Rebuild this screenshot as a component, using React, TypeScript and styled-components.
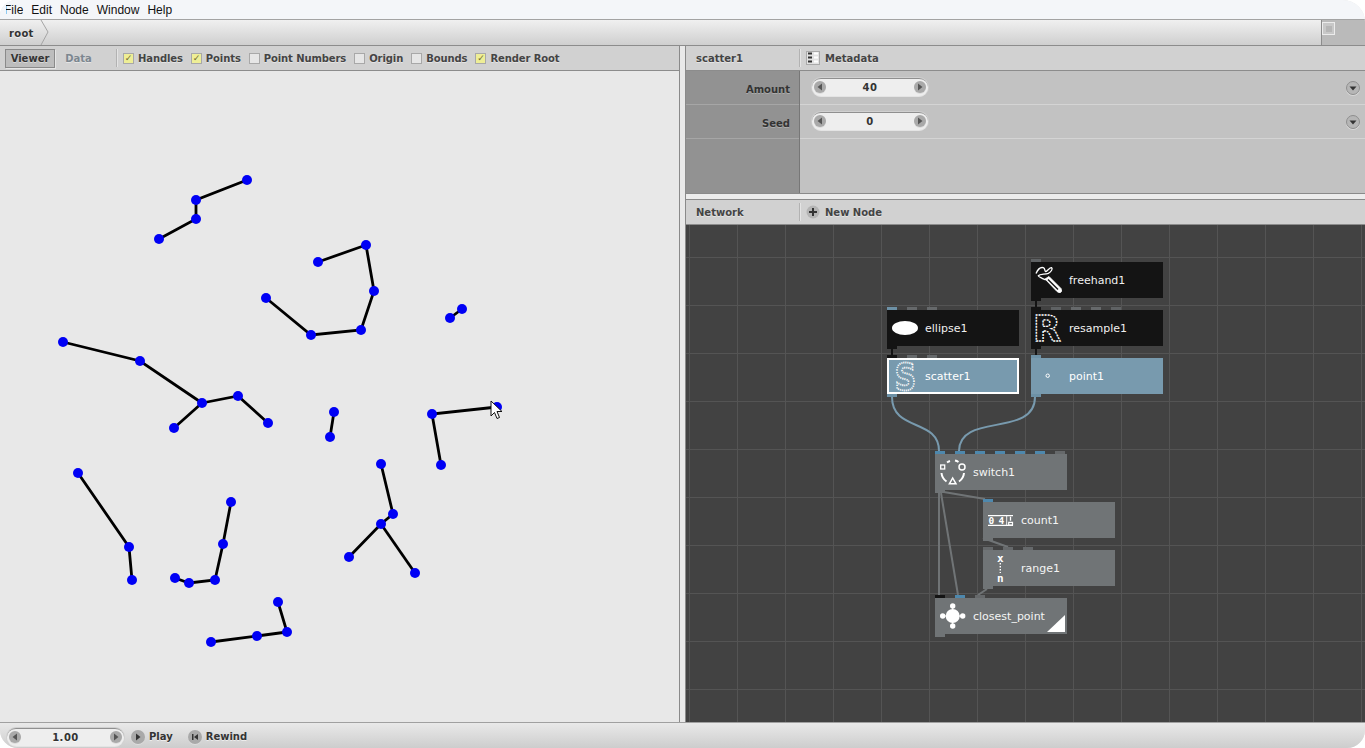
import React from "react";
import styled, { createGlobalStyle } from "styled-components";

const GlobalStyle = createGlobalStyle`
  html, body {
    margin: 0;
    padding: 0;
    background: #ffffff;
    overflow: hidden;
  }
`;

const uiFont = `"DejaVu Sans", Verdana, sans-serif`;

const Window = styled.div`
  width: 1365px;
  height: 748px;
  display: flex;
  flex-direction: column;
  overflow: hidden;
  border-radius: 16px 22px 18px 18px;
  font-family: ${uiFont};
  background: #e8e8e8;
`;

const MenuBar = styled.div`
  height: 19px;
  flex: none;
  display: flex;
  align-items: center;
  gap: 8px;
  padding-left: 4px;
  background: #f4f6f9;
  border-bottom: 1px solid #a3a3a3;
`;

const MenuItem = styled.span`
  font-family: "Liberation Sans", Arial, sans-serif;
  font-size: 12px;
  color: #111;

  &:first-child {
    clip-path: inset(0 0 0 2px);
  }
`;

const AddressBar = styled.div`
  height: 25px;
  flex: none;
  display: flex;
  background: linear-gradient(#f0f0f0, #cfcfcf);
  border-bottom: 1px solid #8c8c8c;
`;

const Crumb = styled.div`
  display: flex;
  align-items: center;
  padding-left: 9px;
  font-size: 10px;
  font-weight: bold;
  letter-spacing: 0.3px;
  color: #333;
  text-shadow: 0 1px 0 rgba(255, 255, 255, 0.6);
`;

const CrumbText = styled.span`
  padding-top: 2px;
`;

const CrumbArrow = styled.svg`
  width: 10px;
  height: 25px;
  margin-left: 6px;
`;

const AddressEnd = styled.div`
  margin-left: auto;
  width: 43px;
  background: #bababa;
  border-left: 1px solid #8c8c8c;
  display: flex;
  align-items: flex-start;
`;

const ExpandButton = styled.div`
  width: 11px;
  height: 11px;
  margin-top: 2px;
  border: 1px solid #ececec;
  background: #c8c8c8;
  display: flex;
  align-items: center;
  justify-content: center;

  &::after {
    content: "";
    width: 6px;
    height: 6px;
    background: #b6b6b6;
  }
`;

const Main = styled.div`
  flex: 1;
  min-height: 0;
  display: flex;
`;

const LeftPane = styled.div`
  width: 679px;
  flex: none;
  display: flex;
  flex-direction: column;
`;

const VSplitter = styled.div`
  width: 7px;
  flex: none;
  box-sizing: border-box;
  background: #e9e9e9;
  border-left: 1px solid #8a8a8a;
  border-right: 1px solid #8a8a8a;
`;

const RightPane = styled.div`
  flex: 1;
  min-width: 0;
  display: flex;
  flex-direction: column;
`;

const HeaderBar = styled.div`
  height: 24px;
  flex: none;
  display: flex;
  align-items: center;
  background: #d1d1d1;
  border-bottom: 1px solid #8c8c8c;
  font-size: 10px;
  font-weight: bold;
  color: #444;
  text-shadow: 0 1px 0 rgba(255, 255, 255, 0.45);
`;

const ViewerTab = styled.div<{ $active?: boolean }>`
  height: 19px;
  width: ${(p) => (p.$active ? "50px" : "47px")};
  margin-left: ${(p) => (p.$active ? "5px" : "0")};
  box-sizing: border-box;
  display: flex;
  align-items: center;
  justify-content: center;
  color: ${(p) => (p.$active ? "#333" : "#7c8790")};
  background: ${(p) => (p.$active ? "#bdbdbd" : "transparent")};
  border: ${(p) => (p.$active ? "1px solid #8a8a8a" : "none")};
  box-shadow: ${(p) => (p.$active ? "1px 1px 0 #e6e6e6" : "none")};
`;

const Separator = styled.div<{ $left?: number }>`
  width: 1px;
  height: 18px;
  background: #b2b2b2;
  box-shadow: 1px 0 0 #e4e4e4;
  margin-left: ${(p) => p.$left ?? 0}px;
`;

const Options = styled.div`
  display: flex;
  align-items: center;
  gap: 8px;
  margin-left: 6px;
  letter-spacing: -0.1px;
`;

const Option = styled.label`
  display: flex;
  align-items: center;
  gap: 4px;
`;

const CheckBox = styled.span<{ $on?: boolean }>`
  width: 9px;
  height: 9px;
  display: flex;
  align-items: center;
  justify-content: center;
  background: ${(p) => (p.$on ? "#eeee96" : "#e6e6e6")};
  border: 1px solid #a8a8a8;
  font-size: 9px;
  line-height: 9px;
  color: #6f6f30;
  text-shadow: none;
`;

const Canvas = styled.div`
  flex: 1;
  min-height: 0;
  position: relative;
  background: #e8e8e8;
`;

const ViewerSvg = styled.svg`
  display: block;
  width: 100%;
  height: 100%;
`;

const Cursor = styled.svg`
  position: absolute;
  left: 490px;
  top: 329px;
  width: 13px;
  height: 20px;
`;

const PaneTitle = styled.div`
  width: 113px;
  box-sizing: border-box;
  padding-left: 10px;
  flex: none;
`;

const HeaderIcon = styled.svg`
  width: 14px;
  height: 14px;
  margin-right: 5px;
`;

const HeaderAction = styled.div`
  display: flex;
  align-items: center;
  margin-left: 6px;
`;

const ParamPanel = styled.div`
  height: 122px;
  flex: none;
  display: grid;
  grid-template-columns: 114px 1fr;
  background: #c2c2c2;
`;

const LabelColumn = styled.div`
  background: #929292;
  border-right: 1px solid #777;
  display: flex;
  flex-direction: column;
`;

const ParamLabel = styled.div`
  height: 30px;
  padding: 3px 9px 0 0;
  border-bottom: 1px solid #a6a6a6;
  display: flex;
  align-items: center;
  justify-content: flex-end;
  font-size: 10px;
  font-weight: bold;
  color: #333;
  text-shadow: 0 1px 0 rgba(255, 255, 255, 0.25);
`;

const ValueColumn = styled.div`
  display: flex;
  flex-direction: column;
`;

const ParamRow = styled.div`
  height: 31px;
  border-bottom: 1px solid #d4d4d4;
  display: flex;
  align-items: center;
  padding: 0 5px 2px 12px;
`;

const Spinner = styled.div<{ $width: number }>`
  width: ${(p) => p.$width}px;
  height: 18px;
  box-sizing: border-box;
  display: flex;
  align-items: center;
  justify-content: space-between;
  padding: 0 2px;
  border-radius: 9px;
  background: #eeeeee;
  border-top: 1px solid #8f8f8f;
  box-shadow: 0 1px 0 #e4e4e4, 0 0 0 1px #d0d0d0;
  font-size: 10px;
  font-weight: bold;
  letter-spacing: 0.5px;
  color: #333;
`;

const RoundButton = styled.span<{ $size?: number }>`
  width: ${(p) => p.$size ?? 12}px;
  height: ${(p) => p.$size ?? 12}px;
  flex: none;
  border-radius: 50%;
  background: #a9a9a9;
  box-shadow: 0 1px 0 #dddddd;
  display: flex;
  align-items: center;
  justify-content: center;
`;

const Glyph = styled.svg`
  width: 8px;
  height: 8px;
  display: block;
`;

const MenuArrow = styled(RoundButton)`
  margin: 2px 0 0 auto;
  background: #b6b6b6;
  border: 1px solid #8e8e8e;
  box-sizing: border-box;
  box-shadow: 0 1px 0 #d8d8d8;
`;

const HSplitter = styled.div`
  height: 5px;
  flex: none;
  background: #ececec;
  border-top: 1px solid #8a8a8a;
  border-bottom: 1px solid #8a8a8a;
`;

const NetworkView = styled.div`
  flex: 1;
  min-height: 0;
  position: relative;
  overflow: hidden;
  background-color: #424242;
  background-image: linear-gradient(to right, #545454 1px, transparent 1px),
    linear-gradient(to bottom, #545454 1px, transparent 1px);
  background-size: 48px 48px;
  background-position: 3px 32px;
`;

const Wires = styled.svg`
  position: absolute;
  left: 0;
  top: 0;
  width: 679px;
  height: 497px;
  fill: none;
`;

const palette = {
  dark: { body: "#141414", text: "#f0f0f0" },
  blue: { body: "#789aae", text: "#ffffff" },
  gray: { body: "#707476", text: "#f4f4f4" },
};

const Node = styled.div<{ $x: number; $y: number; $kind: keyof typeof palette; $selected?: boolean }>`
  position: absolute;
  left: ${(p) => p.$x}px;
  top: ${(p) => p.$y}px;
  width: 132px;
  height: 36px;
  box-sizing: border-box;
  display: flex;
  align-items: center;
  padding-left: 38px;
  background: ${(p) => palette[p.$kind].body};
  color: ${(p) => palette[p.$kind].text};
  box-shadow: ${(p) => (p.$selected ? "inset 0 0 0 2px #ffffff" : "none")};
  font-size: 11px;
`;

const NodeIcon = styled.svg`
  position: absolute;
  left: 4px;
  top: 2px;
  width: 32px;
  height: 32px;
  overflow: visible;
`;

const Port = styled.span<{ $offset: number; $color: string; $bottom?: boolean }>`
  position: absolute;
  left: ${(p) => p.$offset}px;
  top: ${(p) => (p.$bottom ? "36px" : "-3px")};
  width: 10px;
  height: 3px;
  background: ${(p) => p.$color};
`;

const CornerFlag = styled.svg`
  position: absolute;
  right: 2px;
  bottom: 2px;
  width: 18px;
  height: 17px;
`;

const Footer = styled.div`
  height: 23px;
  flex: none;
  display: flex;
  align-items: center;
  padding: 2px 0 0 7px;
  background: linear-gradient(#e9e9e9, #cdcdcd);
  border-top: 1px solid #a0a0a0;
  font-size: 10px;
  font-weight: bold;
  color: #333;
  text-shadow: 0 1px 0 rgba(255, 255, 255, 0.6);
`;

const FooterAction = styled.div<{ $left: number }>`
  display: flex;
  align-items: center;
  gap: 4px;
  margin-left: ${(p) => p.$left}px;
`;

const PORT_BLUE = "#4e88ad";
const PORT_LIGHTBLUE = "#6d91a6";
const PORT_GRAY = "#66696b";
const PORT_DARK = "#141414";
const PORT_MUTED = "#5f6264";
const PORT_BODY = "#707476";

const strokes: string[] = [
  "247,180 196,200 196,219 159,239",
  "318,262 366,245 374,291 361,330 311,335 266,298",
  "462,309 450,318",
  "63,342 140,361 202,403 174,428",
  "202,403 238,396 268,423",
  "334,412 330,437",
  "441,465 432,414 497,407",
  "78,473 129,547 132,580",
  "231,502 223,544 215,580 189,583 175,578",
  "381,464 393,514 381,524 349,557",
  "381,524 415,573",
  "278,602 287,632 257,636 211,642",
];

const dots = Array.from(new Set(strokes.flatMap((s) => s.split(" ")))).map((p) =>
  p.split(",").map(Number)
);

const Arrow = ({ dir, color = "#555" }: { dir: "left" | "right" | "down"; color?: string }) => (
  <Glyph viewBox="0 0 8 8">
    {dir === "left" && <path d="M6 0.5V7.5L1.5 4Z" fill={color} />}
    {dir === "right" && <path d="M2 0.5V7.5L6.5 4Z" fill={color} />}
    {dir === "down" && <path d="M0.5 2.5H7.5L4 6.5Z" fill={color} />}
  </Glyph>
);

const NumberField = ({ value, width }: { value: string; width: number }) => (
  <Spinner $width={width}>
    <RoundButton><Arrow dir="left" /></RoundButton>
    {value}
    <RoundButton><Arrow dir="right" /></RoundButton>
  </Spinner>
);

const icons: Record<string, React.ReactNode> = {
  freehand: (
    <g fill="none" stroke="#fff">
      <path d="M1 9.5 C3 5 6 3 8.3 3.7 C10.5 4.5 9.5 7.5 10.7 7.7 C12.5 7 15 3 16.7 3.7 C18 5 16 8 13.3 9.3 C10 10.5 5 10 3.3 11.7 C3 13 8 14.5 10.7 16" strokeWidth="1.3" />
      <path d="M10 15 L14 12.5 L26 24.5 Q27.5 27.5 25.5 28.5 Q23.5 29 22 27.5 Z" fill="#fff" strokeWidth="0.8" />
      <path d="M13 15.5 L23 25.5" stroke="#141414" strokeWidth="1.4" />
    </g>
  ),
  resample: (
    <g opacity="0.99">
      <text x="-2" y="29" fontFamily="'DejaVu Sans', sans-serif" fontWeight="bold" fontSize="36" fill="none" stroke="#fff" strokeWidth="1.4" strokeDasharray="2 1">R</text>
    </g>
  ),
  ellipse: <ellipse cx="14" cy="16" rx="13" ry="7" fill="#fff" />,
  scatter: (
    <g opacity="0.99" transform="translate(3 0) scale(0.8 1)">
      <text x="1" y="30" fontFamily="'DejaVu Sans', sans-serif" fontWeight="bold" fontSize="37" fill="none" stroke="#fff" strokeWidth="1.9" strokeDasharray="1.3 1.2">S</text>
    </g>
  ),
  point: <circle cx="12.7" cy="15.7" r="1.7" fill="none" stroke="#fff" strokeWidth="1" />,
  switch: (
    <g fill="none" stroke="#fff" strokeWidth="2">
      <path d="M8 6.5 A11.5 11.5 0 0 1 11 5 M16 4.6 A11.5 11.5 0 0 1 19.5 6 M25 17 A11.5 11.5 0 0 1 20 25.5 M7.5 25.5 A11.5 11.5 0 0 1 2.5 17" />
      <rect x="1.7" y="9" width="4" height="4" strokeWidth="1.3" />
      <circle cx="23" cy="11" r="3" strokeWidth="1.5" />
      <path d="M13.7 22 L17 27.8 H10.4 Z" strokeWidth="1.5" />
    </g>
  ),
  count: (
    <g>
      <path d="M1 11.7 H26 M1 21.3 H26" stroke="#fff" strokeWidth="1.2" />
      <text x="1.6" y="20" fontFamily="'DejaVu Sans Mono', monospace" fontWeight="bold" fontSize="9.5" fill="#fff">0</text>
      <text x="11.5" y="20" fontFamily="'DejaVu Sans Mono', monospace" fontWeight="bold" fontSize="9.5" fill="#fff">4</text>
      <path d="M19.7 12 V21" stroke="#fff" strokeWidth="0.9" />
      <path d="M23.5 12.7 V16.7" stroke="#fff" strokeWidth="1.3" />
      <path d="M21.7 18.3 H25.5 V21 H21.7 Z" fill="none" stroke="#fff" strokeWidth="1.2" />
    </g>
  ),
  range: (
    <g fill="#fff" textAnchor="middle" fontFamily="'DejaVu Sans Mono', monospace" fontWeight="bold" fontSize="11">
      <text x="13.3" y="9.7">x</text>
      <path d="M13.3 11 V21" stroke="#fff" strokeWidth="1.4" strokeDasharray="1.4 1.6" fill="none" />
      <text x="13.3" y="29.7">n</text>
    </g>
  ),
  closest: (
    <g fill="#fff">
      <circle cx="13.7" cy="16" r="7" />
      <circle cx="13.7" cy="6" r="2.7" />
      <circle cx="13.7" cy="26" r="2.7" />
      <circle cx="3.7" cy="16" r="2.7" />
      <circle cx="23.7" cy="16" r="2.7" />
      <path d="M13.7 6 V26 M3.7 16 H23.7" stroke="#fff" strokeWidth="1" />
    </g>
  ),
};

type PortDef = { offset: number; color: string; bottom?: boolean };

type NodeDef = {
  label: string;
  x: number;
  y: number;
  kind: keyof typeof palette;
  icon: string;
  selected?: boolean;
  flag?: boolean;
  ports: PortDef[];
};

const topPorts = (...colors: string[]): PortDef[] =>
  colors.map((color, i) => ({ offset: i * 20, color }));

const output = (color: string): PortDef => ({ offset: 0, color, bottom: true });

const nodes: NodeDef[] = [
  { label: "freehand1", x: 345, y: 37, kind: "dark", icon: "freehand",
    ports: [...topPorts(PORT_MUTED), output(PORT_DARK)] },
  { label: "ellipse1", x: 201, y: 85, kind: "dark", icon: "ellipse",
    ports: [...topPorts(PORT_LIGHTBLUE, PORT_GRAY, PORT_GRAY), output(PORT_DARK)] },
  { label: "resample1", x: 345, y: 85, kind: "dark", icon: "resample",
    ports: [...topPorts(PORT_DARK, PORT_MUTED, PORT_GRAY, PORT_GRAY, PORT_MUTED), output(PORT_DARK)] },
  { label: "scatter1", x: 201, y: 133, kind: "blue", icon: "scatter", selected: true,
    ports: [...topPorts(PORT_DARK, PORT_GRAY, PORT_GRAY), output(PORT_LIGHTBLUE)] },
  { label: "point1", x: 345, y: 133, kind: "blue", icon: "point",
    ports: [...topPorts(PORT_LIGHTBLUE), output(PORT_LIGHTBLUE)] },
  { label: "switch1", x: 249, y: 229, kind: "gray", icon: "switch",
    ports: [...topPorts(PORT_BLUE, PORT_BLUE, PORT_BLUE, PORT_BLUE, PORT_BLUE, PORT_BLUE, PORT_GRAY), output(PORT_BODY)] },
  { label: "count1", x: 297, y: 277, kind: "gray", icon: "count",
    ports: [...topPorts(PORT_BLUE), output(PORT_BODY)] },
  { label: "range1", x: 297, y: 325, kind: "gray", icon: "range",
    ports: [...topPorts(PORT_GRAY, PORT_GRAY, PORT_GRAY), output(PORT_BODY)] },
  { label: "closest_point", x: 249, y: 373, kind: "gray", icon: "closest", flag: true,
    ports: [...topPorts(PORT_DARK, PORT_BLUE, PORT_GRAY), output(PORT_BODY)] },
];

const options: { label: string; on: boolean }[] = [
  { label: "Handles", on: true },
  { label: "Points", on: true },
  { label: "Point Numbers", on: false },
  { label: "Origin", on: false },
  { label: "Bounds", on: false },
  { label: "Render Root", on: true },
];

const App = () => {
  return (
    <Window>
      <GlobalStyle />
      <MenuBar>
        {["File", "Edit", "Node", "Window", "Help"].map((m) => (
          <MenuItem key={m}>{m}</MenuItem>
        ))}
      </MenuBar>
      <AddressBar>
        <Crumb>
          <CrumbText>root</CrumbText>
          <CrumbArrow viewBox="0 0 10 25">
            <path d="M1 0 L8 12 L1 25" fill="none" stroke="#a4a4a4" />
          </CrumbArrow>
        </Crumb>
        <AddressEnd><ExpandButton /></AddressEnd>
      </AddressBar>
      <Main>
        <LeftPane>
          <HeaderBar>
            <ViewerTab $active>Viewer</ViewerTab>
            <ViewerTab>Data</ViewerTab>
            <Separator $left={14} />
            <Options>
              {options.map((o) => (
                <Option key={o.label}>
                  <CheckBox $on={o.on}>{o.on ? "✓" : ""}</CheckBox>
                  {o.label}
                </Option>
              ))}
            </Options>
          </HeaderBar>
          <Canvas>
            <ViewerSvg viewBox="0 71 679 651">
              {strokes.map((s) => (
                <polyline key={s} points={s} fill="none" stroke="#000" strokeWidth="2.8" />
              ))}
              {dots.map(([x, y]) => (
                <circle key={`${x}-${y}`} cx={x} cy={y} r="5" fill="#0000f5" />
              ))}
            </ViewerSvg>
            <Cursor viewBox="0 0 13 20">
              <path d="M1 1 V16 L4.5 12.5 L7 18.5 L9.5 17.5 L7 11.5 H12 Z" fill="#fff" stroke="#111" strokeWidth="1" />
            </Cursor>
          </Canvas>
        </LeftPane>
        <VSplitter />
        <RightPane>
          <HeaderBar>
            <PaneTitle>scatter1</PaneTitle>
            <Separator />
            <HeaderAction>
              <HeaderIcon viewBox="0 0 14 14">
                <rect x="0.5" y="0.5" width="13" height="13" fill="#e2e2e2" stroke="#aaa" />
                <path d="M2 2.5H6M2 6.5H6M2 10.5H6" stroke="#333" strokeWidth="2" />
                <path d="M8 2.5H12M8 6.5H12M8 10.5H12" stroke="#fff" strokeWidth="2" />
              </HeaderIcon>
              Metadata
            </HeaderAction>
          </HeaderBar>
          <ParamPanel>
            <LabelColumn>
              <ParamLabel>Amount</ParamLabel>
              <ParamLabel>Seed</ParamLabel>
            </LabelColumn>
            <ValueColumn>
              <ParamRow>
                <NumberField value="40" width={116} />
                <MenuArrow $size={14}><Arrow dir="down" color="#333" /></MenuArrow>
              </ParamRow>
              <ParamRow>
                <NumberField value="0" width={116} />
                <MenuArrow $size={14}><Arrow dir="down" color="#333" /></MenuArrow>
              </ParamRow>
            </ValueColumn>
          </ParamPanel>
          <HSplitter />
          <HeaderBar>
            <PaneTitle>Network</PaneTitle>
            <Separator />
            <HeaderAction>
              <HeaderIcon viewBox="0 0 14 14">
                <circle cx="7" cy="7" r="6.5" fill="#b4b4b4" />
                <path d="M7 3V11M3 7H11" stroke="#333" strokeWidth="2" />
              </HeaderIcon>
              New Node
            </HeaderAction>
          </HeaderBar>
          <NetworkView>
            <Wires viewBox="686 225 679 497">
              <path d="M892 397 C892 432 939 418 939 451" stroke="#789aae" strokeWidth="2" />
              <path d="M1035 397 C1035 438 959 412 959 451" stroke="#789aae" strokeWidth="2" />
              <path d="M892 349 V355 M1036 301 V307 M1036 349 V355" stroke="#141414" strokeWidth="2" />
              <path d="M938 491 L985 499 M939 493 V595 M941 493 L958 595 M983 538 L1008 547 M987 589 L978 595" stroke="#707476" strokeWidth="2" />
            </Wires>
            {nodes.map((n) => (
              <Node key={n.label} $x={n.x} $y={n.y} $kind={n.kind} $selected={n.selected}>
                {n.ports.map((p, i) => (
                  <Port key={i} $offset={p.offset} $color={p.color} $bottom={p.bottom} />
                ))}
                <NodeIcon viewBox="0 0 32 32">{icons[n.icon]}</NodeIcon>
                {n.label}
                {n.flag && (
                  <CornerFlag viewBox="0 0 18 17">
                    <path d="M0 17 L18 0 V17 Z" fill="#fff" />
                  </CornerFlag>
                )}
              </Node>
            ))}
          </NetworkView>
        </RightPane>
      </Main>
      <Footer>
        <NumberField value="1.00" width={117} />
        <FooterAction $left={7}>
          <RoundButton $size={14}><Arrow dir="right" color="#333" /></RoundButton>
          Play
        </FooterAction>
        <FooterAction $left={15}>
          <RoundButton $size={14}>
            <Glyph viewBox="0 0 8 8"><path d="M1 1H2.5V7H1ZM7 1V7L3 4Z" fill="#333" /></Glyph>
          </RoundButton>
          Rewind
        </FooterAction>
      </Footer>
    </Window>
  );
};

export default App;
